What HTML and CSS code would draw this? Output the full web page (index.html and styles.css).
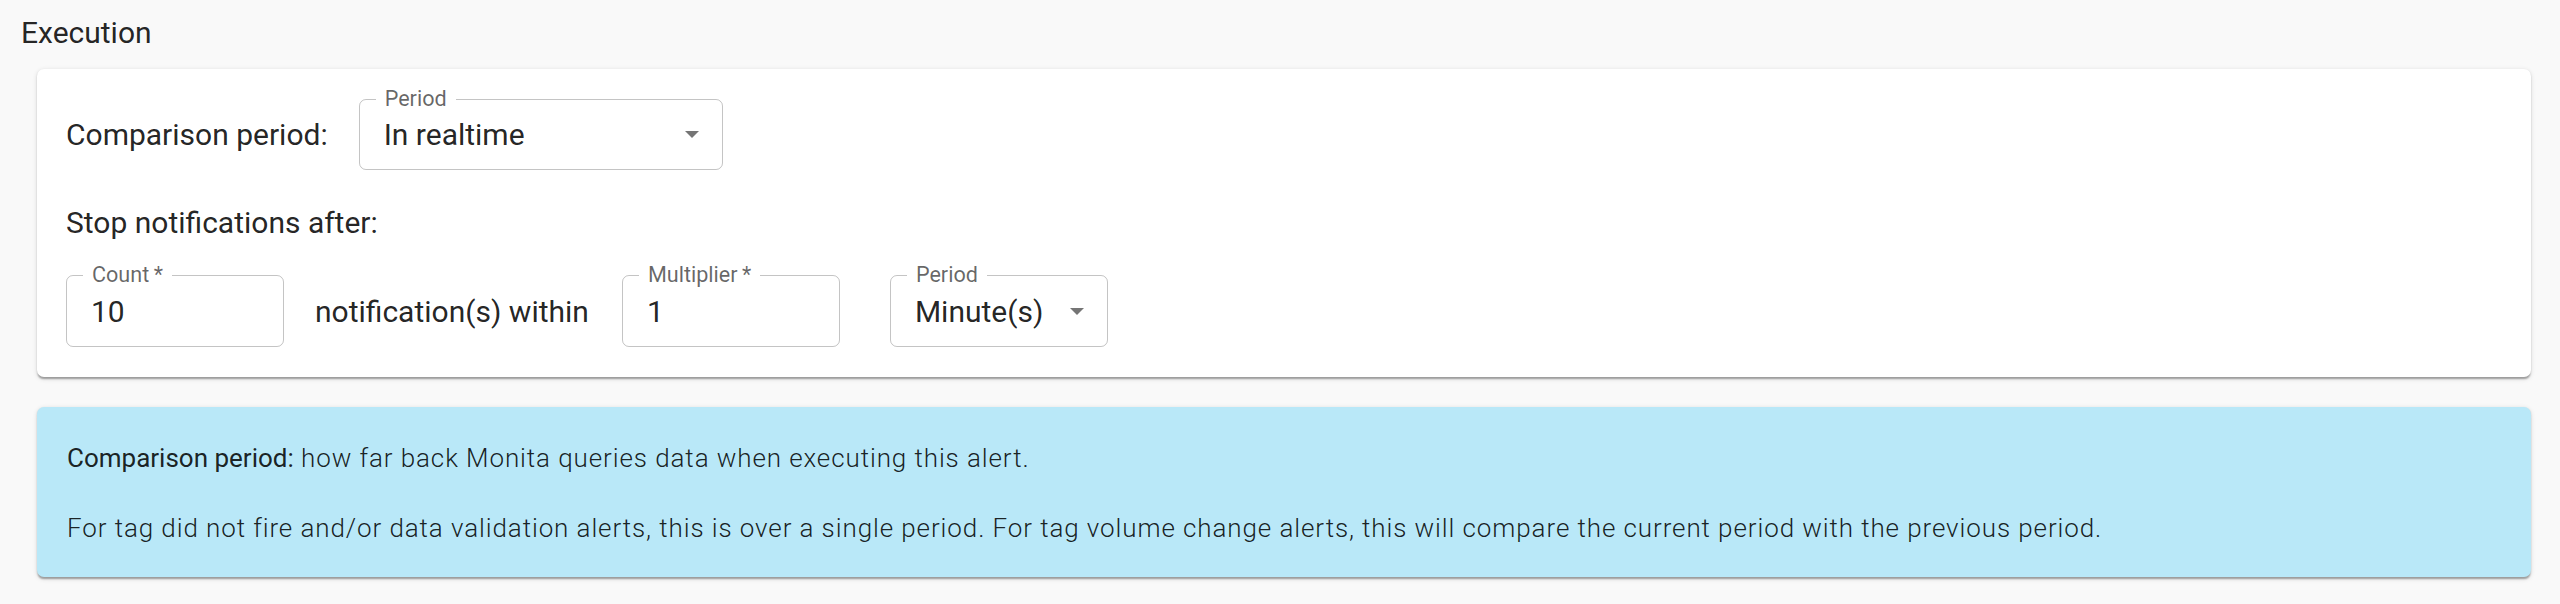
FILE: index.html
```html
<!DOCTYPE html>
<html lang="en">
<head>
<meta charset="utf-8">
<title>Execution</title>
<link rel="stylesheet" href="styles.css">
</head>
<body>
<div class="page">
  <h2 class="section-title">Execution</h2>
  <div class="content">
    <div class="card">
      <div class="row">
        <span class="row-label">Comparison period:</span>
        <div class="field field-select field-period-main">
          <span class="field-label">Period</span>
          <span class="field-value">In realtime</span>
          <svg class="arrow" width="14" height="7" viewBox="0 0 14 7"><path d="M0 0L7 7L14 0Z"/></svg>
        </div>
      </div>
      <div class="subheading">Stop notifications after:</div>
      <div class="row">
        <div class="field field-num">
          <span class="field-label">Count&thinsp;*</span>
          <span class="field-value">10</span>
        </div>
        <span class="row-text">notification(s) within</span>
        <div class="field field-num">
          <span class="field-label">Multiplier&thinsp;*</span>
          <span class="field-value">1</span>
        </div>
        <div class="field field-select field-period-small">
          <span class="field-label">Period</span>
          <span class="field-value">Minute(s)</span>
          <svg class="arrow" width="14" height="7" viewBox="0 0 14 7"><path d="M0 0L7 7L14 0Z"/></svg>
        </div>
      </div>
    </div>
    <div class="info">
      <p><strong>Comparison period:</strong> how far back Monita queries data when executing this alert.</p>
      <p>For tag did not fire and/or data validation alerts, this is over a single period. For tag volume change alerts, this will compare the current period with the previous period.</p>
    </div>
  </div>
</div>
</body>
</html>
```

FILE: styles.css
```css
* { box-sizing: border-box; }
html, body {
  margin: 0;
  padding: 0;
  background: #f9f9f9;
}
body {
  font-family: Roboto, "Noto Sans", sans-serif;
  color: rgba(0, 0, 0, 0.87);
  width: 2560px;
  height: 604px;
  overflow: hidden;
}
.page {
  padding-top: 16px;
}
.section-title {
  margin: 0;
  padding-left: 21px;
  font-size: 30px;
  line-height: 34px;
  font-weight: 400;
}
.content {
  padding: 19px 29px 0 37px;
  display: flex;
  flex-direction: column;
  gap: 30px;
}
.card {
  background: #fff;
  border-radius: 7px;
  box-shadow: 0 3.6px 1.8px -1.8px rgba(0,0,0,0.2), 0 1.8px 1.8px 0 rgba(0,0,0,0.14), 0 1.8px 5.4px 0 rgba(0,0,0,0.12);
  padding: 30px 29px 30px 29px;
  display: flex;
  flex-direction: column;
}
.row {
  display: flex;
  align-items: center;
}
.row-label {
  font-size: 30px;
  margin-right: 31px;
}
.row-text {
  font-size: 30px;
  margin: 0 33px 0 31px;
}
.subheading {
  font-size: 30px;
  line-height: 34px;
  margin: 36px 0 35px;
}
.field {
  position: relative;
  height: 72px;
  border: 1.5px solid rgba(0, 0, 0, 0.23);
  border-radius: 7px;
  display: flex;
  align-items: center;
  padding: 0 23px 0 24px;
}
.field-num { width: 218px; }
.field-period-main { width: 364px; height: 71px; }
.field-period-small { width: 218px; margin-left: 50px; }
.field-select { justify-content: space-between; }
.field-label {
  position: absolute;
  top: -14px;
  left: 16px;
  padding: 0 9px;
  background: #fff;
  font-size: 21.6px;
  line-height: 26px;
  color: rgba(0, 0, 0, 0.6);
}
.field-value {
  font-size: 30px;
}
.arrow {
  fill: rgba(0, 0, 0, 0.54);
  flex: none;
}
.info {
  background: #b9e8f8;
  border-radius: 7px;
  box-shadow: 0 3.6px 1.8px -1.8px rgba(0,0,0,0.2), 0 1.8px 1.8px 0 rgba(0,0,0,0.14), 0 1.8px 5.4px 0 rgba(0,0,0,0.12);
  padding: 33px 30px 31px;
  display: flex;
  flex-direction: column;
  gap: 34px;
}
.info p {
  margin: 0;
  font-size: 26px;
  line-height: 36px;
  font-weight: 300;
  letter-spacing: 0.9px;
  color: rgba(0, 0, 0, 0.87);
}
.info strong {
  font-weight: 400;
  letter-spacing: 0;
}
```
